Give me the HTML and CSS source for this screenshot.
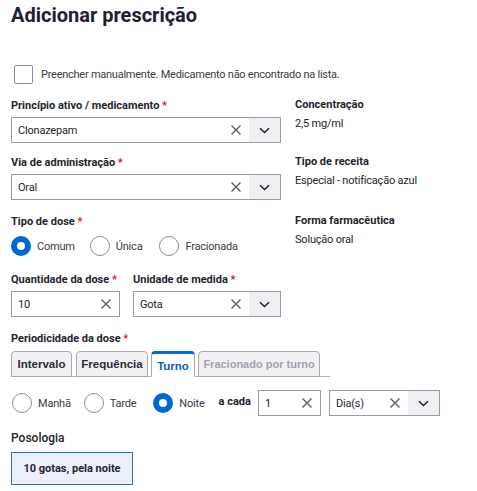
FILE: index.html
```html
<!DOCTYPE html>
<html lang="pt">
<head>
<meta charset="utf-8">
<title>Adicionar prescrição</title>
<link rel="stylesheet" href="styles.css">
</head>
<body>
<div class="page">
  <h1 class="title">Adicionar prescrição</h1>

  <label class="check-row">
    <span class="checkbox"></span>
    <span class="check-text">Preencher manualmente. Medicamento não encontrado na lista.</span>
  </label>

  <div class="grid">
    <div class="field">
      <div class="label">Princípio ativo / medicamento <span class="req">*</span></div>
      <div class="combo">
        <span class="combo-value">Clonazepam</span>
        <span class="clear"><svg width="12" height="12" viewBox="0 0 12 12"><path d="M1.5 1.5L10.5 10.5M10.5 1.5L1.5 10.5" stroke="#5a5a66" stroke-width="1.4" fill="none"/></svg></span>
        <span class="drop"><svg width="11" height="7" viewBox="0 0 11 7"><path d="M1 1.2L5.5 5.5L10 1.2" stroke="#1f1f2a" stroke-width="1.5" fill="none"/></svg></span>
      </div>
    </div>
    <div class="info">
      <div class="label">Concentração</div>
      <div class="value">2,5 mg/ml</div>
    </div>

    <div class="field">
      <div class="label">Via de administração <span class="req">*</span></div>
      <div class="combo">
        <span class="combo-value">Oral</span>
        <span class="clear"><svg width="12" height="12" viewBox="0 0 12 12"><path d="M1.5 1.5L10.5 10.5M10.5 1.5L1.5 10.5" stroke="#5a5a66" stroke-width="1.4" fill="none"/></svg></span>
        <span class="drop"><svg width="11" height="7" viewBox="0 0 11 7"><path d="M1 1.2L5.5 5.5L10 1.2" stroke="#1f1f2a" stroke-width="1.5" fill="none"/></svg></span>
      </div>
    </div>
    <div class="info">
      <div class="label">Tipo de receita</div>
      <div class="value">Especial - notificação azul</div>
    </div>

    <div class="field field-dose">
      <div class="label">Tipo de dose <span class="req">*</span></div>
      <div class="radios">
        <span class="radio-item"><span class="radio checked"></span>Comum</span>
        <span class="radio-item"><span class="radio"></span>Única</span>
        <span class="radio-item"><span class="radio"></span>Fracionada</span>
      </div>
    </div>
    <div class="info info-forma">
      <div class="label">Forma farmacêutica</div>
      <div class="value">Solução oral</div>
    </div>
  </div>

  <div class="row-qty">
    <div class="field field-qty">
      <div class="label">Quantidade da dose <span class="req">*</span></div>
      <div class="combo">
        <span class="combo-value">10</span>
        <span class="clear"><svg width="12" height="12" viewBox="0 0 12 12"><path d="M1.5 1.5L10.5 10.5M10.5 1.5L1.5 10.5" stroke="#5a5a66" stroke-width="1.4" fill="none"/></svg></span>
      </div>
    </div>
    <div class="field field-unit">
      <div class="label">Unidade de medida <span class="req">*</span></div>
      <div class="combo">
        <span class="combo-value">Gota</span>
        <span class="clear"><svg width="12" height="12" viewBox="0 0 12 12"><path d="M1.5 1.5L10.5 10.5M10.5 1.5L1.5 10.5" stroke="#5a5a66" stroke-width="1.4" fill="none"/></svg></span>
        <span class="drop"><svg width="11" height="7" viewBox="0 0 11 7"><path d="M1 1.2L5.5 5.5L10 1.2" stroke="#1f1f2a" stroke-width="1.5" fill="none"/></svg></span>
      </div>
    </div>
  </div>

  <div class="field field-period">
    <div class="label">Periodicidade da dose <span class="req">*</span></div>
    <div class="tabs">
      <span class="tab tab-intervalo">Intervalo</span>
      <span class="tab tab-freq">Frequência</span>
      <span class="tab tab-active">Turno</span>
      <span class="tab tab-disabled">Fracionado por turno</span>
    </div>
  </div>

  <div class="turno-row">
    <span class="radio-item r-manha"><span class="radio"></span>Manhã</span>
    <span class="radio-item r-tarde"><span class="radio"></span>Tarde</span>
    <span class="radio-item r-noite"><span class="radio checked"></span>Noite</span>
    <span class="acada">a cada</span>
    <div class="combo combo-num">
      <span class="combo-value">1</span>
      <span class="clear"><svg width="12" height="12" viewBox="0 0 12 12"><path d="M1.5 1.5L10.5 10.5M10.5 1.5L1.5 10.5" stroke="#5a5a66" stroke-width="1.4" fill="none"/></svg></span>
    </div>
    <div class="combo combo-dias">
      <span class="combo-value">Dia(s)</span>
      <span class="clear"><svg width="12" height="12" viewBox="0 0 12 12"><path d="M1.5 1.5L10.5 10.5M10.5 1.5L1.5 10.5" stroke="#5a5a66" stroke-width="1.4" fill="none"/></svg></span>
      <span class="drop"><svg width="11" height="7" viewBox="0 0 11 7"><path d="M1 1.2L5.5 5.5L10 1.2" stroke="#1f1f2a" stroke-width="1.5" fill="none"/></svg></span>
    </div>
  </div>

  <div class="posologia">
    <div class="poso-label">Posologia</div>
    <div class="poso-box">10 gotas, pela noite</div>
  </div>
</div>
</body>
</html>
```
FILE: styles.css
```css
* { box-sizing: border-box; }
html, body { margin: 0; padding: 0; background: #fff; }
body {
  font-family: "Roboto", "Liberation Sans", sans-serif;
  font-size: 11px;
  color: #24252e;
}
.page { padding: 0 11px; width: 477px; }

.title {
  margin: 3px 0 0;
  font-size: 20px;
  line-height: 24px;
  font-weight: 700;
  color: #1f2030;
}

.check-row {
  display: flex;
  align-items: center;
  margin-top: 38px;
  margin-left: 3px;
  height: 19px;
}
.checkbox {
  width: 19px;
  height: 19px;
  border: 1px solid #8a8a98;
  border-radius: 2px;
  margin-right: 8px;
  flex: none;
}
.check-text { color: #3a3b46; letter-spacing: -0.25px; }

.grid {
  display: grid;
  grid-template-columns: 270px 1fr;
  column-gap: 14px;
  margin-top: 14px;
}
.field-dose, .info-forma { margin-top: 14px; }
.grid > .field:nth-child(3), .grid > .info:nth-child(4) { margin-top: 12px; }

.label {
  font-weight: 700;
  line-height: 16px;
  color: #24252e;
}
.req { color: #d0202a; }
.info .label { margin-top: -1px; }
.value { margin-top: 3px; line-height: 16px; letter-spacing: -0.2px; }

.combo {
  margin-top: 3px;
  height: 26px;
  border: 1px solid #9a9aa6;
  display: flex;
  align-items: stretch;
  background: #fff;
}
.combo-value {
  flex: 1;
  padding-left: 6px;
  display: flex;
  align-items: center;
  letter-spacing: -0.2px;
}
.clear {
  width: 26px;
  display: flex;
  align-items: center;
  justify-content: center;
}
.drop {
  width: 31px;
  background: #efeff4;
  display: flex;
  align-items: center;
  justify-content: center;
}

.radios {
  display: flex;
  align-items: center;
  margin-top: 6px;
  height: 20px;
}
.radio-item {
  display: flex;
  align-items: center;
  color: #3a3b46;
  margin-right: 15px;
  letter-spacing: -0.2px;
}
.radios .radio-item:nth-child(2) { margin-right: 17px; }
.radio {
  width: 20px;
  height: 20px;
  border-radius: 50%;
  border: 1px solid #8d8d9b;
  margin-right: 6px;
  flex: none;
}
.radio.checked { border: 6px solid #0069d0; }

.row-qty {
  display: flex;
  gap: 13px;
  margin-top: 16px;
}
.field-qty { width: 109px; }
.field-unit { width: 148px; }

.field-period { margin-top: 14px; }
.tabs {
  margin-top: 3px;
  width: 319px;
  display: flex;
  align-items: flex-end;
  border-bottom: 1px solid #b4b4bf;
  height: 27px;
}
.tab {
  height: 26px;
  margin-bottom: -1px;
  border: 1px solid #a9a9b4;
  border-radius: 4px 4px 0 0;
  background: #f1f1f4;
  font-family: "Liberation Sans", "Roboto", sans-serif;
  font-weight: 700;
  font-size: 11.5px;
  white-space: nowrap;
  color: #2a2b36;
  display: flex;
  align-items: center;
  justify-content: center;
  margin-right: 3px;
}
.tab-intervalo { width: 61px; margin-right: 4px; }
.tab-freq { width: 72px; }
.tab-active {
  width: 44px;
  background: #fff;
  border-top: 3px solid #0a6ad4;
  border-bottom-color: #fff;
  color: #0a5fc0;
  padding-top: 1px;
}
.tab-disabled { width: 122px; color: #a2a2ac; font-size: 11px; }

.turno-row {
  display: flex;
  align-items: center;
  margin-top: 13px;
  height: 26px;
}
.r-manha { margin-left: 1px; margin-right: 13px; }
.r-tarde { margin-right: 17px; }
.r-noite { margin-right: 14px; }
.acada { font-weight: 700; margin-right: 7px; margin-top: -3px; }
.turno-row .combo { margin-top: 0; height: 26px; }
.combo-num { width: 63px; margin-right: 8px; }
.combo-dias { width: 111px; }

.posologia { margin-top: 14px; }
.poso-label {
  font-size: 12px;
  font-weight: 500;
  line-height: 16px;
}
.poso-box {
  margin-top: 6px;
  width: 122px;
  height: 33px;
  border: 1px solid #2f6ed4;
  background: #ecf0fc;
  font-weight: 700;
  display: flex;
  align-items: center;
  justify-content: center;
}
```
